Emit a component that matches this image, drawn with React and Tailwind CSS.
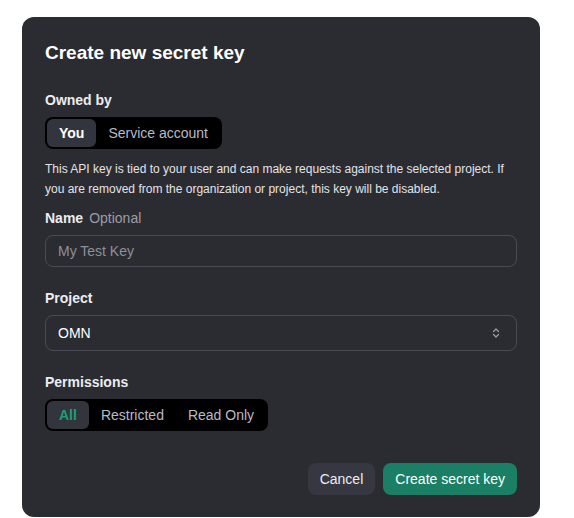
import React, { useState } from "react";

const Segmented = ({ options, value, onChange, activeText }) => (
    <div className="inline-flex items-center bg-black rounded-lg p-[2px] h-8">
        {options.map((opt) => (
            <button
                key={opt}
                onClick={() => onChange(opt)}
                className={`h-full px-3 rounded-md text-[14px] ${
                    value === opt ? `bg-[#33353e] font-semibold ${activeText}` : "text-[#b9bac4]"
                }`}
            >
                {opt}
            </button>
        ))}
    </div>
);

const App = () => {
    const [owner, setOwner] = useState("You");
    const [perm, setPerm] = useState("All");

    return (
        <div className="min-h-screen bg-white pt-[17px] pl-[22px]" style={{ fontFamily: '"Liberation Sans", Arial, sans-serif' }}>
            {/* Dialog */}
            <div className="w-[518px] h-[500px] bg-[#2b2c31] rounded-[12px] px-[23px] pt-[22px] text-[#ececf1]">
                <h2 className="text-[19px] font-bold leading-[28px] text-white">Create new secret key</h2>

                {/* Owned by */}
                <div className="mt-[23px] text-[14px] font-semibold leading-[20px]">Owned by</div>
                <div className="mt-[7px]">
                    <Segmented options={["You", "Service account"]} value={owner} onChange={setOwner} activeText="text-white" />
                </div>
                <p className="mt-[10px] text-[12px] leading-[20px] text-[#e3e3e8]">
                    This API key is tied to your user and can make requests against the selected project. If you are removed from the organization or project, this key will be disabled.
                </p>

                {/* Name */}
                <div className="mt-[9px] text-[14px] leading-[20px]">
                    <span className="font-semibold">Name</span>
                    <span className="ml-[6px] text-[#9b9ca6]">Optional</span>
                </div>
                <input
                    placeholder="My Test Key"
                    className="mt-[7px] w-full h-[32px] rounded-lg border border-[#4a4b55] bg-transparent px-3 text-[14px] text-white placeholder:text-[#8e8f99] outline-none"
                />

                {/* Project */}
                <div className="mt-[21px] text-[14px] font-semibold leading-[20px]">Project</div>
                <div className="mt-[7px] w-full h-[36px] rounded-lg border border-[#4a4b55] flex items-center justify-between px-3 text-[14px] text-white">
                    <span>OMN</span>
                    <svg width="10" height="12" viewBox="0 0 10 12" fill="none" stroke="#9b9ca6" strokeWidth="1.3" strokeLinecap="round" strokeLinejoin="round" className="mr-[3px]">
                        <path d="M2.5 4.5 L5 2 L7.5 4.5" />
                        <path d="M2.5 7.5 L5 10 L7.5 7.5" />
                    </svg>
                </div>

                {/* Permissions */}
                <div className="mt-[21px] text-[14px] font-semibold leading-[20px]">Permissions</div>
                <div className="mt-[7px]">
                    <Segmented options={["All", "Restricted", "Read Only"]} value={perm} onChange={setPerm} activeText="text-[#1f9e74]" />
                </div>

                {/* Actions */}
                <div className="mt-[32px] flex justify-end gap-2">
                    <button className="h-8 px-3 rounded-lg bg-[#363741] text-[14px] text-[#ececf1]">Cancel</button>
                    <button className="h-8 px-3 rounded-lg bg-[#1a7f64] text-[14px] text-white">Create secret key</button>
                </div>
            </div>
        </div>
    );
};

export default App;
